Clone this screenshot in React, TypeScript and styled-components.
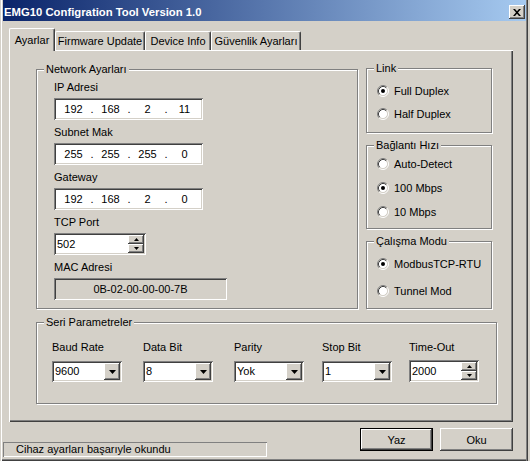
import React from 'react'
import styled, { createGlobalStyle } from 'styled-components'

const FACE = '#d4d0c8'
const SHADOW = '#808080'
const DARK = '#404040'
const LIGHT = '#ffffff'

const GlobalStyle = createGlobalStyle`
  * { box-sizing: border-box; }
  html, body { margin: 0; padding: 0; background: ${FACE}; }
  body {
    font-family: 'Liberation Sans', Arial, sans-serif;
    font-size: 11px;
    color: #000;
  }
`

const raised = `box-shadow: inset -1px -1px ${DARK}, inset 1px 1px ${LIGHT}, inset -2px -2px ${SHADOW}, inset 2px 2px ${FACE};`
const sunken = `box-shadow: inset 1px 1px ${SHADOW}, inset -1px -1px ${LIGHT}, inset 2px 2px ${DARK}, inset -2px -2px ${FACE};`

const Window = styled.div`
  width: 530px;
  height: 461px;
  display: flex;
  flex-direction: column;
  padding: 0 4px 2px 3px;
  background: ${FACE};
  box-shadow: inset 1px 0 ${FACE}, inset 2px 0 ${LIGHT}, inset -2px 0 ${FACE}, inset -3px 0 ${DARK},
    inset -4px 0 ${SHADOW}, inset 0 -1px ${DARK}, inset 0 -2px ${SHADOW};
`

const TitleBar = styled.div`
  flex: 0 0 auto;
  height: 21px;
  display: flex;
  align-items: center;
  justify-content: space-between;
  padding: 2px 1px 0 1px;
  background: linear-gradient(to right, #0a246a, #a6caf0);
`

const Title = styled.span`
  color: #fff;
  font-weight: bold;
  font-size: 11.3px;
  white-space: nowrap;
`

const CloseButton = styled.div`
  align-self: flex-start;
  margin-top: 3px;
  width: 16px;
  height: 14px;
  background: ${FACE};
  display: flex;
  align-items: center;
  justify-content: center;
  ${raised}
`

const Body = styled.div`
  display: flex;
  flex-direction: column;
  padding: 7px 13px 0 6px;
`

const TabStrip = styled.div`
  height: 22px;
  display: flex;
  align-items: flex-end;
  padding-left: 2px;
`

const Tab = styled.div<{ $active?: boolean; $w: number }>`
  position: relative;
  z-index: ${p => (p.$active ? 1 : 0)};
  width: ${p => p.$w + (p.$active ? 2 : 0)}px;
  height: ${p => (p.$active ? 23 : 19)}px;
  margin-left: ${p => (p.$active ? -2 : 0)}px;
  margin-bottom: ${p => (p.$active ? -1 : 0)}px;
  display: flex;
  align-items: center;
  justify-content: center;
  padding-bottom: ${p => (p.$active ? 1 : 0)}px;
  background: ${FACE};
  border-top: 1px solid ${LIGHT};
  border-left: 1px solid ${LIGHT};
  border-right: 1px solid ${DARK};
  border-radius: 2px 2px 0 0;
  box-shadow: inset -1px 0 ${SHADOW};
  white-space: nowrap;
`

const Panel = styled.div`
  height: 372px;
  display: flex;
  flex-direction: column;
  padding: 18px 0 0 27px;
  box-shadow: inset 1px 1px ${LIGHT}, inset -1px -1px ${DARK}, inset -2px -2px ${SHADOW};
`

const TopRow = styled.div`
  display: flex;
  align-items: flex-start;
  gap: 8px;
`

const RightColumn = styled.div`
  display: flex;
  flex-direction: column;
  gap: 12px;
`

const GroupBox = styled.div<{ $w: number; $h: number; $pt: number; $pl: number; $gap?: number; $mt?: number }>`
  position: relative;
  width: ${p => p.$w}px;
  height: ${p => p.$h}px;
  margin-top: ${p => p.$mt ?? 0}px;
  padding: ${p => p.$pt}px 0 0 ${p => p.$pl}px;
  display: flex;
  flex-direction: column;
  gap: ${p => p.$gap ?? 0}px;
  border: 1px solid ${SHADOW};
  box-shadow: inset 1px 1px ${LIGHT}, 1px 1px ${LIGHT};
`

const Caption = styled.span`
  position: absolute;
  top: -7px;
  left: 7px;
  padding: 0 2px;
  line-height: 13px;
  background: ${FACE};
  white-space: nowrap;
`

const Field = styled.div`
  display: flex;
  flex-direction: column;
`

const Label = styled.div<{ $mb?: number }>`
  line-height: 14px;
  margin-bottom: ${p => p.$mb ?? 4}px;
  white-space: nowrap;
`

const IpBox = styled.div`
  width: 149px;
  height: 22px;
  display: flex;
  align-items: center;
  padding-left: 7px;
  background: #fff;
  ${sunken}
`

const IpPart = styled.span<{ $w: number }>`
  width: ${p => p.$w}px;
  text-align: center;
`

const SpinBox = styled.div<{ $w: number }>`
  width: ${p => p.$w}px;
  height: 22px;
  display: flex;
  padding: 2px;
  background: #fff;
  ${sunken}
`

const BoxText = styled.div`
  flex: 1;
  padding-left: 1px;
  line-height: 18px;
`

const SpinButtons = styled.div`
  width: 16px;
  display: flex;
  flex-direction: column;
`

const SpinButton = styled.div`
  flex: 1;
  display: flex;
  align-items: center;
  justify-content: center;
  background: ${FACE};
  ${raised}
`

const MacBox = styled.div`
  width: 173px;
  height: 22px;
  line-height: 22px;
  text-align: center;
  background: ${FACE};
  ${sunken}
`

const RadioRow = styled.div`
  height: 16px;
  display: flex;
  align-items: center;
  gap: 5px;
  white-space: nowrap;
`

const SerialGrid = styled.div`
  display: grid;
  grid-template-columns: 91px 91px 88px 87px 70px;
`

const Combo = styled.div`
  width: 70px;
  height: 21px;
  display: flex;
  padding: 2px;
  background: #fff;
  ${sunken}
`

const ComboText = styled.div`
  flex: 1;
  padding-left: 1px;
  line-height: 17px;
`

const ComboButton = styled.div`
  width: 16px;
  display: flex;
  align-items: center;
  justify-content: center;
  background: ${FACE};
  ${raised}
`

const Footer = styled.div`
  flex: 1;
  display: flex;
  align-items: flex-start;
  padding: 6px 13px 0 0;
`

const StatusField = styled.div`
  width: 264px;
  height: 15px;
  margin-top: 14px;
  padding-left: 13px;
  line-height: 15px;
  white-space: nowrap;
  box-shadow: inset 1px 1px ${SHADOW}, inset -1px -1px ${LIGHT};
`

const Buttons = styled.div`
  margin-left: auto;
  display: flex;
  gap: 7px;
`

const Button = styled.button<{ $default?: boolean }>`
  width: 73px;
  height: 23px;
  padding: 0;
  border: none;
  font: inherit;
  color: #000;
  background: ${FACE};
  box-shadow: ${p =>
    p.$default
      ? `inset 0 0 0 1px #000, inset -2px -2px ${DARK}, inset 2px 2px ${LIGHT}, inset -3px -3px ${SHADOW}`
      : `inset -1px -1px ${DARK}, inset 1px 1px ${LIGHT}, inset -2px -2px ${SHADOW}, inset 2px 2px ${FACE}`};
`

const CloseGlyph = () => (
  <svg width="8" height="7" viewBox="0 0 8 7">
    <path d="M0 0h2l2 2.2L6 0h2L5 3.5 8 7H6L4 4.8 2 7H0l3-3.5z" fill="#000" />
  </svg>
)

const Arrow = ({ up, w = 5, h = 3 }: { up?: boolean; w?: number; h?: number }) => (
  <svg width={w} height={h} viewBox={`0 0 ${w} ${h}`}>
    <polygon points={up ? `0,${h} ${w},${h} ${w / 2},0` : `0,0 ${w},0 ${w / 2},${h}`} fill="#000" />
  </svg>
)

const Radio = ({ checked }: { checked?: boolean }) => (
  <svg width="12" height="12" viewBox="0 0 12 12">
    <circle cx="6" cy="6" r="4.5" fill="#fff" />
    <path d="M2.11 9.89A5.5 5.5 0 0 1 9.89 2.11" stroke={SHADOW} fill="none" />
    <path d="M9.89 2.11A5.5 5.5 0 0 1 2.11 9.89" stroke={LIGHT} fill="none" />
    <path d="M2.82 9.18A4.5 4.5 0 0 1 9.18 2.82" stroke={DARK} fill="none" />
    <path d="M9.18 2.82A4.5 4.5 0 0 1 2.82 9.18" stroke={FACE} fill="none" />
    {checked && <circle cx="6" cy="6" r="2" fill="#000" />}
  </svg>
)

const IpInput = ({ parts }: { parts: string[] }) => (
  <IpBox>
    {parts.map((p, i) => (
      <React.Fragment key={i}>
        {i > 0 && <IpPart $w={12}>.</IpPart>}
        <IpPart $w={25}>{p}</IpPart>
      </React.Fragment>
    ))}
  </IpBox>
)

const Spin = ({ value, w }: { value: string; w: number }) => (
  <SpinBox $w={w}>
    <BoxText>{value}</BoxText>
    <SpinButtons>
      <SpinButton><Arrow up /></SpinButton>
      <SpinButton><Arrow /></SpinButton>
    </SpinButtons>
  </SpinBox>
)

const ComboBox = ({ value }: { value: string }) => (
  <Combo>
    <ComboText>{value}</ComboText>
    <ComboButton><Arrow w={7} h={4} /></ComboButton>
  </Combo>
)

const tabs = [
  { label: 'Ayarlar', w: 44, active: true },
  { label: 'Firmware Update', w: 90 },
  { label: 'Device Info', w: 66 },
  { label: 'Güvenlik Ayarları', w: 90 },
]

const serial = [
  { label: 'Baud Rate', value: '9600' },
  { label: 'Data Bit', value: '8' },
  { label: 'Parity', value: 'Yok' },
  { label: 'Stop Bit', value: '1' },
]

export default function App() {
  return (
    <>
      <GlobalStyle />
      <Window>
        <TitleBar>
          <Title>EMG10 Configration Tool Version 1.0</Title>
          <CloseButton><CloseGlyph /></CloseButton>
        </TitleBar>
        <Body>
          <TabStrip>
            {tabs.map(t => (
              <Tab key={t.label} $w={t.w} $active={t.active}>{t.label}</Tab>
            ))}
          </TabStrip>
          <Panel>
            <TopRow>
              <GroupBox $w={322} $h={240} $pt={10} $pl={17} $gap={5} $mt={1}>
                <Caption>Network Ayarları</Caption>
                <Field>
                  <Label>IP Adresi</Label>
                  <IpInput parts={['192', '168', '2', '11']} />
                </Field>
                <Field>
                  <Label>Subnet Mak</Label>
                  <IpInput parts={['255', '255', '255', '0']} />
                </Field>
                <Field>
                  <Label>Gateway</Label>
                  <IpInput parts={['192', '168', '2', '0']} />
                </Field>
                <Field>
                  <Label>TCP Port</Label>
                  <Spin value="502" w={92} />
                </Field>
                <Field>
                  <Label>MAC Adresi</Label>
                  <MacBox>0B-02-00-00-00-7B</MacBox>
                </Field>
              </GroupBox>
              <RightColumn>
                <GroupBox $w={126} $h={65} $pt={14} $pl={10} $gap={7}>
                  <Caption>Link</Caption>
                  <RadioRow><Radio checked />Full Duplex</RadioRow>
                  <RadioRow><Radio />Half Duplex</RadioRow>
                </GroupBox>
                <GroupBox $w={126} $h={84} $pt={10} $pl={10} $gap={8}>
                  <Caption>Bağlantı Hızı</Caption>
                  <RadioRow><Radio />Auto-Detect</RadioRow>
                  <RadioRow><Radio checked />100 Mbps</RadioRow>
                  <RadioRow><Radio />10 Mbps</RadioRow>
                </GroupBox>
                <GroupBox $w={126} $h={68} $pt={14} $pl={10} $gap={11}>
                  <Caption>Çalışma Modu</Caption>
                  <RadioRow><Radio checked />ModbusTCP-RTU</RadioRow>
                  <RadioRow><Radio />Tunnel Mod</RadioRow>
                </GroupBox>
              </RightColumn>
            </TopRow>
            <GroupBox $w={461} $h={82} $pt={17} $pl={15} $mt={13}>
              <Caption>Seri Parametreler</Caption>
              <SerialGrid>
                {serial.map(s => (
                  <Field key={s.label}>
                    <Label $mb={7}>{s.label}</Label>
                    <ComboBox value={s.value} />
                  </Field>
                ))}
                <Field>
                  <Label $mb={6}>Time-Out</Label>
                  <Spin value="2000" w={70} />
                </Field>
              </SerialGrid>
            </GroupBox>
          </Panel>
        </Body>
        <Footer>
          <StatusField>Cihaz ayarları başarıyle okundu</StatusField>
          <Buttons>
            <Button $default>Yaz</Button>
            <Button>Oku</Button>
          </Buttons>
        </Footer>
      </Window>
    </>
  )
}
